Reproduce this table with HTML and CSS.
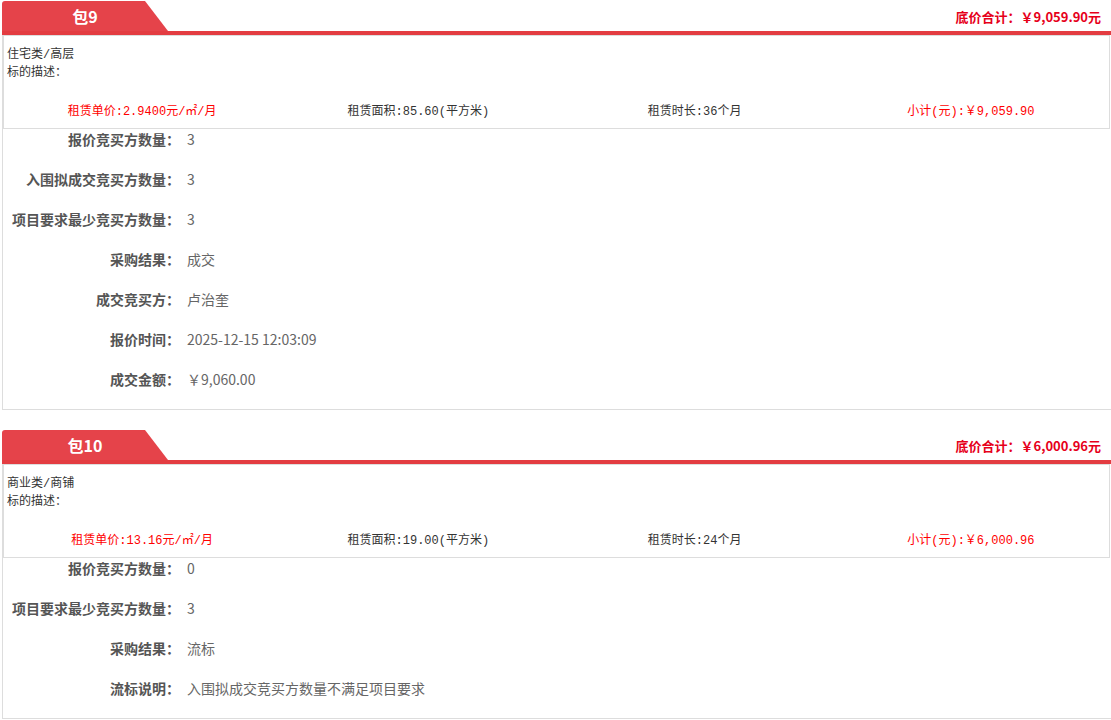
FILE: index.html
```html
<!DOCTYPE html>
<html lang="zh-CN">
<head>
<meta charset="utf-8">
<title>包信息</title>
<link rel="stylesheet" href="styles.css">
</head>
<body>
<div class="pkg">
  <div class="pkg-head">
    <div class="tab">包9</div>
    <div class="total">底价合计：￥9,059.90元</div>
  </div>
  <div class="pkg-body">
    <div class="desc">
      <div class="desc-text">住宅类/高层<br>标的描述：</div>
      <div class="price-row">
        <span class="cell red">租赁单价:2.9400元/㎡/月</span>
        <span class="cell">租赁面积:85.60(平方米)</span>
        <span class="cell">租赁时长:36个月</span>
        <span class="cell red">小计(元):￥9,059.90</span>
      </div>
    </div>
    <dl class="info">
      <div class="row"><dt>报价竞买方数量：</dt><dd>3</dd></div>
      <div class="row"><dt>入围拟成交竞买方数量：</dt><dd>3</dd></div>
      <div class="row"><dt>项目要求最少竞买方数量：</dt><dd>3</dd></div>
      <div class="row"><dt>采购结果：</dt><dd>成交</dd></div>
      <div class="row"><dt>成交竞买方：</dt><dd>卢治奎</dd></div>
      <div class="row"><dt>报价时间：</dt><dd>2025-12-15 12:03:09</dd></div>
      <div class="row"><dt>成交金额：</dt><dd>￥9,060.00</dd></div>
    </dl>
  </div>
</div>

<div class="pkg">
  <div class="pkg-head">
    <div class="tab">包10</div>
    <div class="total">底价合计：￥6,000.96元</div>
  </div>
  <div class="pkg-body">
    <div class="desc">
      <div class="desc-text">商业类/商铺<br>标的描述：</div>
      <div class="price-row">
        <span class="cell red">租赁单价:13.16元/㎡/月</span>
        <span class="cell">租赁面积:19.00(平方米)</span>
        <span class="cell">租赁时长:24个月</span>
        <span class="cell red">小计(元):￥6,000.96</span>
      </div>
    </div>
    <dl class="info">
      <div class="row"><dt>报价竞买方数量：</dt><dd>0</dd></div>
      <div class="row"><dt>项目要求最少竞买方数量：</dt><dd>3</dd></div>
      <div class="row"><dt>采购结果：</dt><dd>流标</dd></div>
      <div class="row"><dt>流标说明：</dt><dd>入围拟成交竞买方数量不满足项目要求</dd></div>
    </dl>
  </div>
</div>
</body>
</html>
```

FILE: styles.css
```css
html, body {
  margin: 0;
  background: #fff;
}
body {
  padding: 1px 0 0 2px;
  font-family: "Noto Sans CJK SC", "Noto Sans", sans-serif;
  color: #555;
}
.pkg {
  margin-bottom: 20px;
}
.pkg-head {
  display: flex;
  justify-content: space-between;
  align-items: center;
  height: 30px;
  border-bottom: 4px solid #e33c41;
}
.tab {
  width: 166px;
  height: 30px;
  line-height: 30px;
  background: #e5434a;
  color: #fff;
  font-weight: bold;
  font-size: 16px;
  text-align: center;
  border-top-left-radius: 3px;
  clip-path: polygon(0 0, 143px 0, 166px 100%, 0 100%);
}
.total {
  padding-right: 10px;
  color: #e6001a;
  font-weight: bold;
  font-size: 13px;
  line-height: 29px;
}
.pkg-body {
  border-left: 1px solid #ddd;
  border-bottom: 1px solid #ddd;
}
.desc {
  margin-right: 1px;
  border: 1px solid #ddd;
  font-family: "Liberation Mono", "Noto Sans CJK SC", monospace;
  font-size: 12px;
  color: #333;
}
.desc-text {
  padding: 10px 3px 0;
  line-height: 18px;
}
.price-row {
  display: grid;
  grid-template-columns: repeat(4, 1fr);
  align-items: center;
  height: 36px;
  margin-top: 10px;
  text-align: center;
}
.cell.red {
  color: #f00;
}
.info {
  margin: 0;
}
.row {
  display: flex;
  line-height: 21px;
  padding-bottom: 19px;
  font-size: 14px;
}
.row dt {
  width: 177px;
  flex: none;
  text-align: right;
  font-weight: bold;
  color: #555;
}
.row dd {
  margin: 0;
  padding-left: 7px;
  color: #666;
}
```
